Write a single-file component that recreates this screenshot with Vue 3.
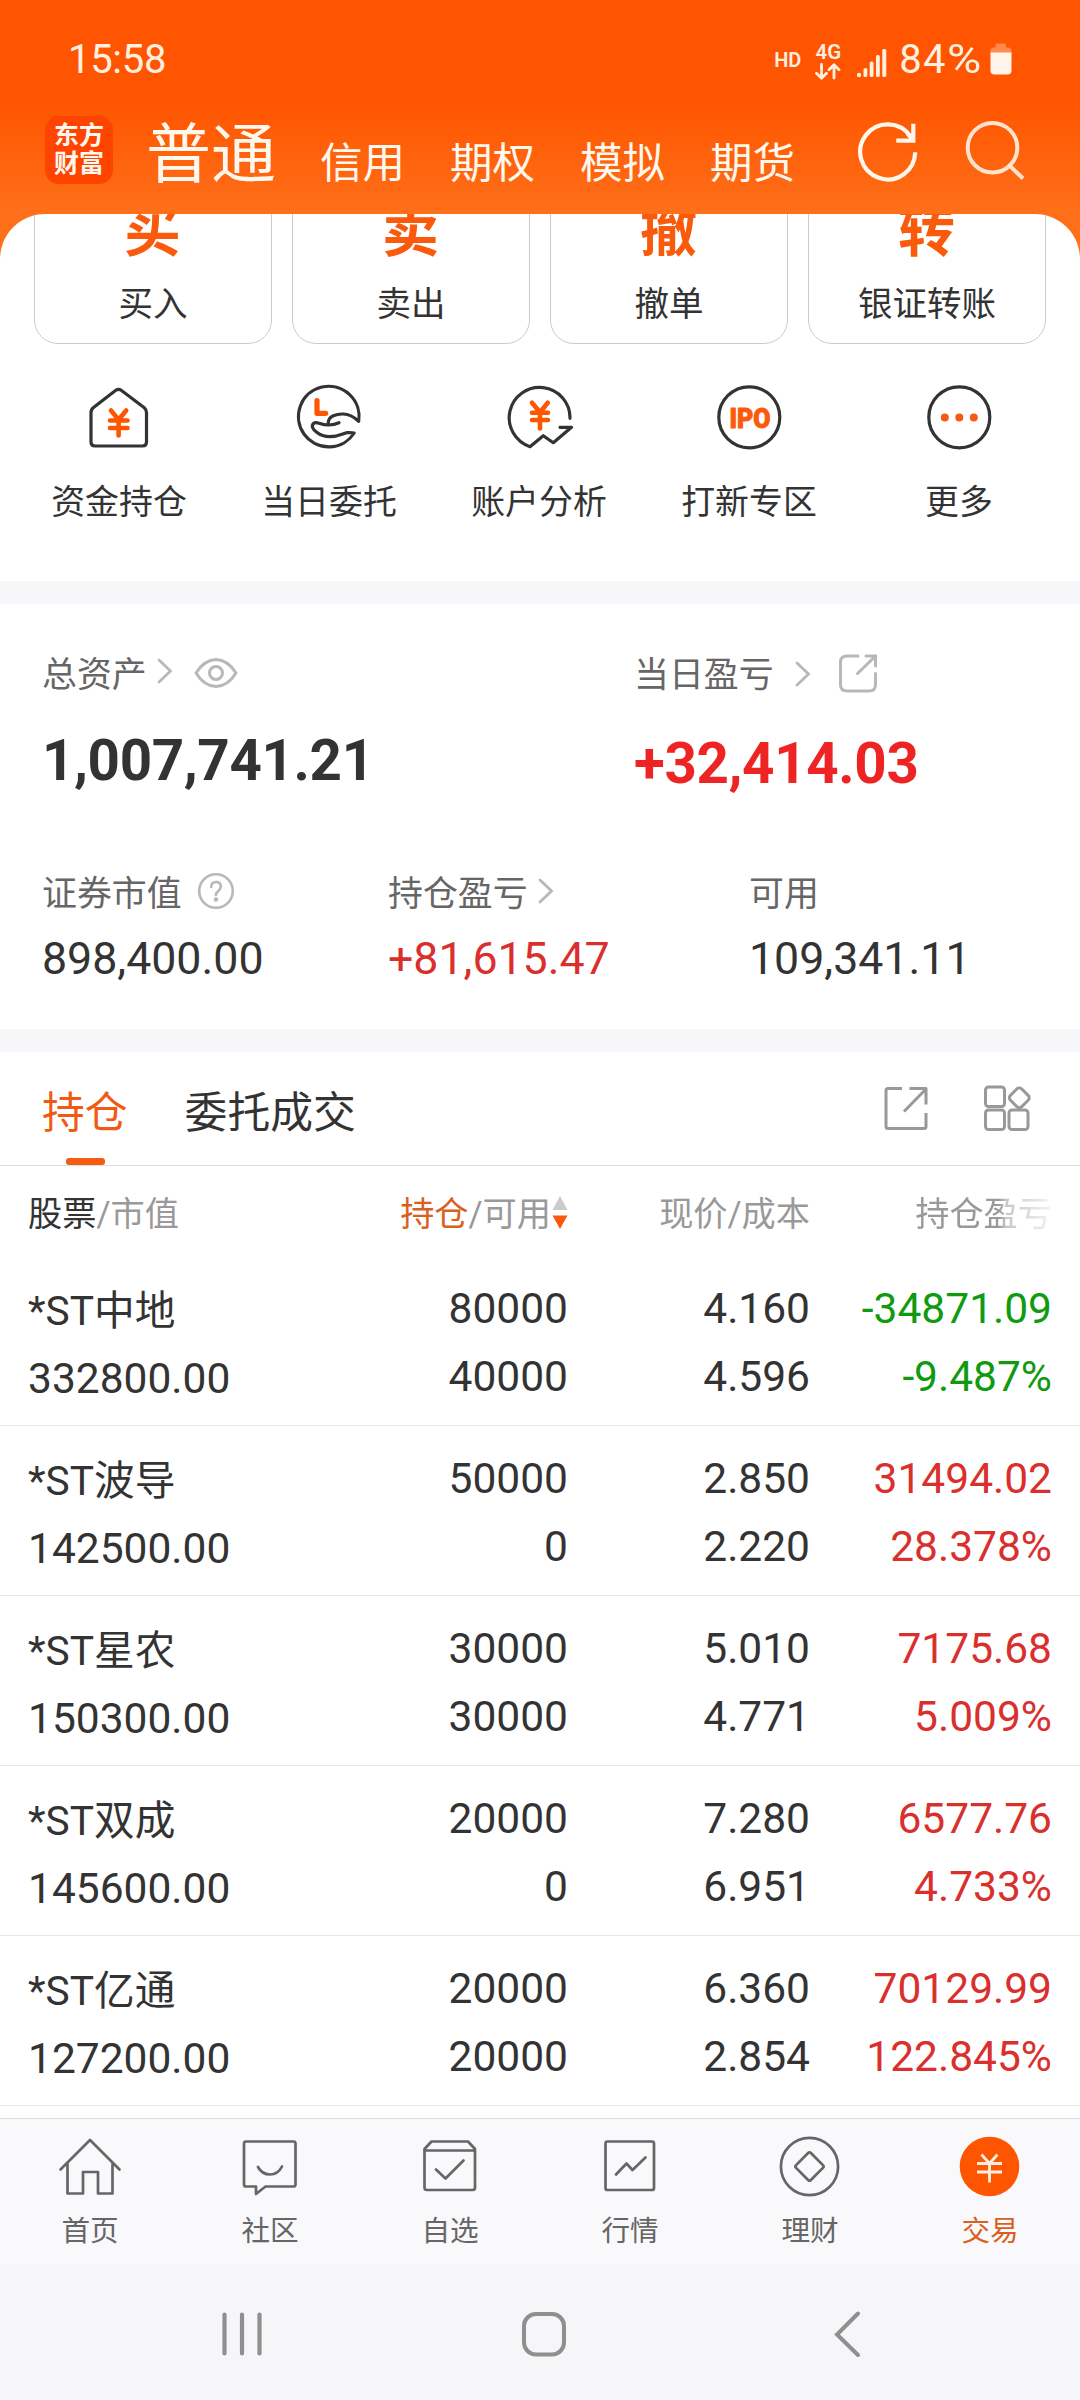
<script setup>
const modes = ['信用', '期权', '模拟', '期货']

const actions = [
  { mark: '买', label: '买入' },
  { mark: '卖', label: '卖出' },
  { mark: '撤', label: '撤单' },
  { mark: '转', label: '银证转账' },
]

const shortcuts = [
  { icon: 'house', label: '资金持仓' },
  { icon: 'hand', label: '当日委托' },
  { icon: 'analysis', label: '账户分析' },
  { icon: 'ipo', label: '打新专区' },
  { icon: 'more', label: '更多' },
]

const holdings = [
  { name: '*ST中地', value: '332800.00', qty: '80000', avail: '40000', price: '4.160', cost: '4.596', pl: '-34871.09', rate: '-9.487%' },
  { name: '*ST波导', value: '142500.00', qty: '50000', avail: '0', price: '2.850', cost: '2.220', pl: '31494.02', rate: '28.378%' },
  { name: '*ST星农', value: '150300.00', qty: '30000', avail: '30000', price: '5.010', cost: '4.771', pl: '7175.68', rate: '5.009%' },
  { name: '*ST双成', value: '145600.00', qty: '20000', avail: '0', price: '7.280', cost: '6.951', pl: '6577.76', rate: '4.733%' },
  { name: '*ST亿通', value: '127200.00', qty: '20000', avail: '20000', price: '6.360', cost: '2.854', pl: '70129.99', rate: '122.845%' },
]

const tabs = [
  { icon: 'home', label: '首页' },
  { icon: 'community', label: '社区' },
  { icon: 'watch', label: '自选' },
  { icon: 'market', label: '行情' },
  { icon: 'wealth', label: '理财' },
  { icon: 'trade', label: '交易', active: true },
]
</script>

<template>
  <div class="screen">
    <header class="top">
      <div class="status">
        <span class="time">15:58</span>
        <div class="indicators">
          <span class="hd">HD</span>
          <div class="net">
            <span>4G</span>
            <svg width="26" height="17" viewBox="0 0 26 17" fill="none" stroke="#ffefe0" stroke-width="2.8" stroke-linecap="round" stroke-linejoin="round">
              <path d="M6.5 1.5V15M1.5 10.3l5 5 5-5M19 15V2M14 6.700l5-5 5 5" />
            </svg>
          </div>
          <svg class="signal" width="32" height="32" viewBox="0 0 32 32" fill="#ffefe0">
            <circle cx="3" cy="28" r="2.200" />
            <rect x="7.500" y="21" width="3.800" height="9" rx="1.600" />
            <rect x="13.700" y="14.500" width="3.800" height="15.500" rx="1.600" />
            <rect x="20" y="8" width="3.800" height="22" rx="1.600" />
            <rect x="26.300" y="2" width="4" height="28" rx="1.600" />
          </svg>
          <span class="pct">84<em>%</em></span>
          <svg class="battery" width="22" height="32" viewBox="0 0 22 32">
            <path d="M7 0.500h7.500q1.500 0 1.500 1.500v2.500h2q3.500 0 3.500 3.500v3H0.500V8q0-3.500 3.500-3.500h1.500V2q0-1.500 1.500-1.500z" fill="#ff8a4d" />
            <path d="M.5 9.500h21v18q0 4-4 4h-13q-4 0-4-4z" fill="#fff3ea" />
          </svg>
        </div>
      </div>
      <div class="nav">
        <div class="logo"><span>东方</span><span>财富</span></div>
        <span class="mode-active">普通</span>
        <span v-for="m in modes" :key="m" class="mode">{{ m }}</span>
        <svg class="refresh" width="62" height="64" viewBox="0 0 62 64" fill="none" stroke="#fff8ea" stroke-width="4.200">
          <path d="M59.200 33.300A27.500 27.500 0 1 1 54.500 17.500" />
          <path d="M57.300 4.700V21.700H40.300M51.500 14.500L57 21" />
        </svg>
        <svg class="search" width="62" height="64" viewBox="0 0 62 64" fill="none" stroke="#ffe3cf" stroke-width="4">
          <circle cx="28.500" cy="27.700" r="24.800" />
          <path d="M45.500 45.500L59 58.500" />
        </svg>
      </div>
    </header>

    <section class="panel">
      <div class="cards">
        <div v-for="a in actions" :key="a.label" class="card">
          <span class="mark">{{ a.mark }}</span>
          <span class="card-label">{{ a.label }}</span>
        </div>
      </div>
      <div class="shortcuts">
        <div v-for="s in shortcuts" :key="s.label" class="shortcut">
          <svg width="70" height="70" viewBox="0 0 70 70" fill="none" stroke="#333" stroke-width="3.200" stroke-linecap="round" stroke-linejoin="round">
            <template v-if="s.icon === 'house'">
              <path d="M31.500 8.500q3-2.200 6 0L60 25.500q2.500 2 2.500 5V60q0 4-4 4H11q-4 0-4-4V30.500q0-3 2.500-5z" />
              <path d="M27 28.500l7.600 9.200 7.600-9.200M34.600 38v15.500M26 38.500h17.500M26 46h17.500" stroke="#fe5500" stroke-width="4.600" />
            </template>
            <template v-else-if="s.icon === 'hand'">
              <path d="M34.300 42.300C33 33.500 44 31.800 49.300 32Q57 32.300 64.700 39.200A30.300 30.300 0 1 0 60.200 51Q57 50.300 52.700 50.700C48 52 44 54.700 36 54.700Q28 54.700 22.700 50.300Q16 45 19.500 41.500Q21 40 25 41.200Q36 45 45 40.700" />
              <path d="M23 18.700V31.300H31.700" stroke="#fe5500" stroke-width="5.200" />
            </template>
            <template v-else-if="s.icon === 'analysis'">
              <path d="M66 36.300A30.400 30.400 0 1 0 26 64.700L39.300 53.700 49.300 60.700 67.500 45.300H56" />
              <path d="M28 20.800l8 9.500 7.800-9.500M36 30.500v16M28 30.700h16M28 38h16" stroke="#fe5500" stroke-width="4.600" />
            </template>
            <template v-else-if="s.icon === 'ipo'">
              <circle cx="35.300" cy="35.300" r="30.500" />
              <text x="15.500" y="45.500" textLength="41" lengthAdjust="spacingAndGlyphs" font-family="Roboto, sans-serif" font-weight="900" font-size="28.500" fill="#fb5a0c" stroke="#fb5a0c" stroke-width="1">IPO</text>
            </template>
            <template v-else>
              <circle cx="35.300" cy="35.300" r="30.500" />
              <g fill="#f45b12" stroke="none">
                <circle cx="20.800" cy="35.500" r="4" /><circle cx="35.300" cy="35.500" r="4" /><circle cx="49.800" cy="35.500" r="4" />
              </g>
            </template>
          </svg>
          <span>{{ s.label }}</span>
        </div>
      </div>
    </section>

    <section class="assets">
      <div class="totals">
        <div class="total">
          <div class="label">
            <span>总资产</span>
            <svg class="chev up" width="16" height="26" viewBox="0 0 16 26"><path d="M2 2l11.500 11L2 24" /></svg>
            <svg class="eye" width="44" height="32" viewBox="0 0 44 32" fill="none" stroke="#b8b8b8" stroke-width="3">
              <path d="M2 16Q10 3 22 2.500 34 3 42 16 34 29 22 29.500 10 29 2 16z" stroke-linejoin="round" />
              <circle cx="22" cy="16" r="6.500" />
            </svg>
          </div>
          <div class="big">1,007,741.21</div>
        </div>
        <div class="total">
          <div class="label">
            <span>当日盈亏</span>
            <svg class="chev wide" width="16" height="26" viewBox="0 0 16 26"><path d="M2 2l11.500 11L2 24" /></svg>
            <svg class="share" width="40" height="40" viewBox="0 0 40 40" fill="none" stroke="#b8b8b8" stroke-width="3" stroke-linecap="round">
              <path d="M20 3H9Q2.500 3 2.500 9V31.500Q2.500 38 9 38H31Q37.500 38 37.500 31.500V20.500M28 3H37.500V13M37 3.500L19.500 20.500" />
            </svg>
          </div>
          <div class="big rise">+32,414.03</div>
        </div>
      </div>
      <div class="stats">
        <div class="stat">
          <div class="label">
            <span>证券市值</span>
            <svg class="help" width="38" height="38" viewBox="0 0 38 38" fill="none" stroke="#b8b8b8" stroke-width="2.600" stroke-linecap="round">
              <circle cx="19" cy="19" r="16.800" />
              <path d="M14.200 15q0-5 4.800-5t4.800 4.500q0 2.500-2.500 4.500T19 23" />
              <circle cx="19" cy="27.500" r="1" fill="#b8b8b8" />
            </svg>
          </div>
          <div class="num">898,400.00</div>
        </div>
        <div class="stat">
          <div class="label">
            <span>持仓盈亏</span>
            <svg class="chev" width="16" height="26" viewBox="0 0 16 26"><path d="M2 2l11.500 11L2 24" /></svg>
          </div>
          <div class="num rise2">+81,615.47</div>
        </div>
        <div class="stat">
          <div class="label"><span>可用</span></div>
          <div class="num">109,341.11</div>
        </div>
      </div>
    </section>

    <section class="positions">
      <div class="tabs">
        <div class="tab on">持仓</div>
        <div class="tab">委托成交</div>
        <svg class="t-share" width="44" height="44" viewBox="0 0 44 44" fill="none" stroke="#999" stroke-width="3" stroke-linejoin="round">
          <path d="M18 2.500H4Q2 2.500 2 4.500V40.500Q2 42.500 4 42.500H40Q42 42.500 42 40.500V27M25.500 2.500H42V18.500M41 4L20 25.500" />
        </svg>
        <svg class="t-grid" width="48" height="48" viewBox="0 0 48 48" fill="none" stroke="#999" stroke-width="3">
          <rect x="2.500" y="3" width="19" height="19.500" rx="3" />
          <rect x="2.500" y="26" width="19" height="19.500" rx="3" />
          <rect x="26" y="26" width="19" height="19.500" rx="3" />
          <rect x="28.300" y="5.800" width="16" height="16" rx="3.500" transform="rotate(45 36.300 13.800)" />
        </svg>
      </div>
      <div class="grid head">
        <div><b>股票</b>/市值</div>
        <div class="sorted">
          <span><i>持仓</i>/可用</span>
          <svg width="16" height="34" viewBox="0 0 16 34"><path d="M8 0l7.500 14H.5z" fill="#ccc" /><path d="M8 33L.5 19.500h15z" fill="#f8590f" /></svg>
        </div>
        <div>现价/成本</div>
        <div class="fade">持仓盈亏</div>
      </div>
      <div v-for="h in holdings" :key="h.name" class="grid row">
        <div class="first"><p class="name">{{ h.name }}</p><p>{{ h.value }}</p></div>
        <div><p>{{ h.qty }}</p><p>{{ h.avail }}</p></div>
        <div><p>{{ h.price }}</p><p>{{ h.cost }}</p></div>
        <div :class="h.pl.startsWith('-') ? 'fall' : 'rise2'"><p>{{ h.pl }}</p><p>{{ h.rate }}</p></div>
      </div>
    </section>

    <nav class="tabbar">
      <div v-for="t in tabs" :key="t.label" class="item" :class="{ active: t.active }">
        <svg width="64" height="64" viewBox="0 0 64 64" fill="none" stroke="#666" stroke-width="2.700" stroke-linejoin="round" stroke-linecap="round">
          <template v-if="t.icon === 'home'">
            <path d="M2.500 35.500L32 6 61.500 35.500M9.500 30V59.500H25V38H40V59.500H54.500V30" />
          </template>
          <template v-else-if="t.icon === 'community'">
            <path d="M8 7.500H55.500Q57.500 7.500 57.500 9.500V50.500Q57.500 52.500 55.500 52.500H27.500L18 60V52.500H8Q6 52.500 6 50.500V9.500Q6 7.500 8 7.500z" />
            <path d="M20 33Q24 40.500 32 40.500T44 32.500" />
          </template>
          <template v-else-if="t.icon === 'watch'">
            <path d="M6.500 15L13.500 7.500H50L57 15V53.500Q57 56 54.500 56H9Q6.500 56 6.500 53.500zM6.500 16.500H57M18 35.500L27.500 44.500 45.500 26.500" />
          </template>
          <template v-else-if="t.icon === 'market'">
            <rect x="7.500" y="7.500" width="48.500" height="48.500" rx="2" />
            <path d="M18 40.500L28.500 29.500 34.500 36 47.500 23.500" />
          </template>
          <template v-else-if="t.icon === 'wealth'">
            <circle cx="31.500" cy="32.500" r="28.600" />
            <rect x="21" y="22" width="21" height="21" rx="2" transform="rotate(45 31.500 32.500)" />
          </template>
          <template v-else>
            <circle cx="31.500" cy="32.500" r="29.800" fill="#ff5500" stroke="none" />
            <path d="M23.500 20.500L31.500 29.500 39.500 20.500M31.500 29.500V48.500M19 29.500H44M19 38H44" stroke="#fff0e6" stroke-width="2.800" stroke-linecap="butt" />
          </template>
        </svg>
        <span>{{ t.label }}</span>
      </div>
    </nav>

    <footer class="sysnav">
      <svg width="44" height="46" viewBox="0 0 44 46" stroke="#8f8f8f" stroke-width="4.200" stroke-linecap="round"><path d="M4.500 3.500v39M22 3.500v39M39.500 3.500v39" /></svg>
      <svg class="sys-home" width="46" height="46" viewBox="0 0 46 46" fill="none" stroke="#8f8f8f" stroke-width="4"><rect x="3" y="3" width="40" height="40.500" rx="12" /></svg>
      <svg class="sys-back" width="30" height="48" viewBox="0 0 30 48" fill="none" stroke="#8f8f8f" stroke-width="4" stroke-linecap="round" stroke-linejoin="miter"><path d="M26 3.500L5 24.500 26 45" /></svg>
    </footer>
  </div>
</template>

<style>
body {
  margin: 0;
}
</style>

<style scoped>
.screen {
  width: 1080px;
  height: 2400px;
  overflow: hidden;
  display: flex;
  flex-direction: column;
  background: linear-gradient(#ff5500 0, #ff5500 100px, #ff6f19 214px, #ff7119 270px, #f7f7fa 270px);
  font-family: Roboto, 'Noto Sans CJK SC', sans-serif;
  color: #333;
}
svg {
  display: block;
  flex: none;
}
p {
  margin: 0;
}
.top {
  height: 214px;
  flex: none;
  white-space: nowrap;
}
.status {
  height: 84px;
  padding: 34px 68px 0;
  box-sizing: border-box;
  display: flex;
  justify-content: space-between;
  color: #ffefe0;
}
.time {
  font-size: 40px;
  line-height: 52px;
  letter-spacing: -0.3px;
}
.indicators {
  display: flex;
  align-items: flex-start;
}
.hd {
  font-size: 20px;
  font-weight: 600;
  line-height: 52px;
  margin-right: 14px;
}
.net {
  display: flex;
  flex-direction: column;
  align-items: center;
  font-size: 20.5px;
  font-weight: 600;
  line-height: 20px;
  padding-top: 8px;
  gap: 1px;
}
.signal {
  margin: 13px 0 0 15px;
}
.pct {
  font-size: 40px;
  line-height: 52px;
  margin-left: 11px;
  letter-spacing: 1.2px;
}
.pct em {
  display: inline-block;
  font-style: normal;
  letter-spacing: 0;
  transform: scaleX(1.17);
  transform-origin: left;
  margin-right: 6px;
}
.battery {
  margin: 9px 0 0 8px;
}
.nav {
  height: 130px;
  display: flex;
  align-items: flex-start;
  color: #fff8ee;
}
.logo {
  width: 68px;
  height: 68px;
  margin: 32px 0 0 45px;
  border-radius: 14px;
  background: #ff4400;
  display: flex;
  flex-direction: column;
  align-items: center;
  justify-content: center;
  font-size: 25px;
  font-weight: 700;
  line-height: 28px;
}
.mode-active {
  font-size: 65px;
  line-height: 90px;
  margin: 26px 0 0 33px;
}
.mode {
  font-size: 42.5px;
  line-height: 60px;
  margin: 50px 0 0 45px;
}
.mode-active + .mode {
  margin-left: 44px;
}
.refresh {
  margin: 35px 0 0 61px;
}
.search {
  margin: 36px 0 0 46px;
}
.panel {
  height: 367px;
  flex: none;
  background: #fff;
  border-radius: 45px 45px 0 0;
  overflow: hidden;
}
.cards {
  display: flex;
  gap: 20px;
  padding-left: 34px;
  margin-top: -50px;
}
.card {
  width: 238px;
  height: 180px;
  box-sizing: border-box;
  border: 1px solid #ccc;
  border-radius: 24px;
  display: flex;
  flex-direction: column;
  align-items: center;
}
.mark {
  font-size: 57px;
  font-weight: 700;
  line-height: 80px;
  margin: 27px 1px 0 0;
  color: #fa5a0c;
}
.card-label {
  font-size: 34.5px;
  line-height: 50px;
  margin-top: 7px;
}
.shortcuts {
  display: flex;
  padding-left: 14px;
  margin-top: 38px;
}
.shortcut {
  width: 210px;
  display: flex;
  flex-direction: column;
  align-items: center;
  font-size: 33.9px;
  line-height: 50px;
  gap: 26px;
}
.assets {
  height: 425px;
  flex: none;
  margin-top: 23px;
  background: #fff;
}
.totals {
  display: flex;
  height: 234px;
  padding: 47px 0 0 42px;
  box-sizing: border-box;
}
.total:first-child {
  width: 592px;
}
.label {
  display: flex;
  align-items: center;
  height: 50px;
  font-size: 34.9px;
  line-height: 50px;
  color: #666;
}
.chev {
  fill: none;
  stroke: #b8b8b8;
  stroke-width: 2.8;
  stroke-linecap: round;
  margin: -8px 0 0 10px;
}
.chev.up {
  margin: -10px 0 0 10px;
}
.chev.wide {
  margin: -4px 0 0 21px;
}
.eye {
  margin: -6px 0 0 21px;
}
.share {
  margin: -7px 0 0 27px;
}
.help {
  margin: -8px 0 0 15px;
}
.big {
  font-size: 56.5px;
  font-weight: 700;
  line-height: 70px;
  margin-top: 25px;
  letter-spacing: -0.35px;
}
.total + .total .big {
  margin-top: 28px;
}
.rise {
  color: #ee2424;
}
.stats {
  display: grid;
  grid-template-columns: 346px 361px 1fr;
  padding-left: 42px;
  padding-top: 32px;
}
.num {
  font-size: 44.7px;
  line-height: 60px;
  margin-top: 9px;
}
.rise2 {
  color: #d9302e;
}
.fall {
  color: #109a10;
}
.positions {
  flex: none;
  height: 1066px;
  margin-top: 23px;
  background: #fff;
}
.tabs {
  height: 113px;
  border-bottom: 1px solid #ddd;
  display: flex;
  align-items: flex-start;
  padding-left: 42px;
}
.tab {
  font-size: 42.8px;
  line-height: 60px;
  height: 113px;
  box-sizing: border-box;
  padding-top: 31px;
  margin-right: 57px;
}
.tab.on {
  color: #f05a14;
  display: flex;
  flex-direction: column;
  align-items: center;
}
.tab.on::after {
  content: '';
  width: 39px;
  height: 7px;
  margin: 15px 0 0 1px;
  border-radius: 3px;
  background: #f55b12;
}
.tab + .tab {
  margin-right: 0;
}
.t-share {
  margin: 34px 0 0 auto;
}
.t-grid {
  margin: 32px 49px 0 55px;
}
.grid {
  display: grid;
  grid-template-columns: 251px 289px 242px 242px;
  padding: 0 28px;
}
.grid > div {
  text-align: right;
}
.grid > div:first-child {
  text-align: left;
}
.head {
  height: 90px;
  font-size: 34.2px;
  line-height: 96px;
  color: #999;
  white-space: nowrap;
}
.head b {
  font-weight: 400;
  color: #333;
}
.head i {
  font-style: normal;
  color: #d9601f;
}
.sorted {
  display: flex;
  justify-content: flex-end;
}
.sorted svg {
  margin: 30px 0 0 1px;
}
.fade {
  -webkit-mask-image: linear-gradient(to right, #000 78%, rgba(0, 0, 0, 0.55) 81%, rgba(0, 0, 0, 0.12) 100%);
  mask-image: linear-gradient(to right, #000 78%, rgba(0, 0, 0, 0.55) 81%, rgba(0, 0, 0, 0.12) 100%);
}
.row {
  height: 170px;
  box-sizing: border-box;
  border-bottom: 1px solid #e8e8e8;
  font-size: 42.5px;
  line-height: 68px;
  padding-top: 19px;
}
.row .first {
  padding-top: 2px;
}
.name {
  font-size: 40.7px;
}
.tabbar {
  flex: none;
  height: 147px;
  box-sizing: border-box;
  border-top: 1px solid #ddd;
  background: #f9f9fb;
  display: flex;
}
.item {
  width: 180px;
  display: flex;
  flex-direction: column;
  align-items: center;
  padding-top: 15px;
  font-size: 28.6px;
  line-height: 40px;
  gap: 13px;
  color: #666;
}
.item.active {
  color: #d9601f;
}
.sysnav {
  flex: 1;
  background: #f6f6f8;
  display: flex;
  align-items: center;
  padding: 2px 0 0 220px;
}
.sys-home {
  margin-left: 257px;
}
.sys-back {
  margin-left: 265px;
}
</style>
